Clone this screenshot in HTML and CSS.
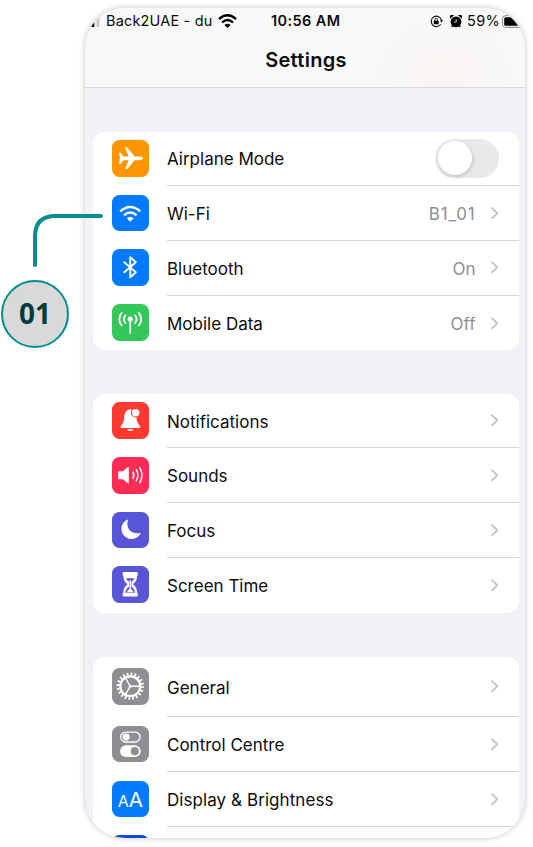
FILE: index.html
```
<!DOCTYPE html>
<html lang="en">
<head>
<meta charset="utf-8">
<title>Settings</title>
<link rel="stylesheet" href="styles.css">
</head>
<body>
<svg class="defs" width="0" height="0">
  <symbol id="chevron" viewBox="0 0 8 13"><path d="M1 1l5.8 5.5L1 12" fill="none" stroke="#c3c3c6" stroke-width="1.9" stroke-linecap="round" stroke-linejoin="round"/></symbol>
</svg>
<main class="phone">
  <header class="header">
    <div class="status">
      <div class="carrier">
        <svg class="signal" width="15" height="12" viewBox="0 0 15 12"><rect x="6" y="3" width="3.4" height="9" rx="1" fill="#000"/><rect x="11.5" y="0" width="3" height="12" rx="1" fill="#c8c8c8"/></svg>
        <span class="operator">Back2UAE - du</span>
        <svg width="19" height="14" viewBox="0 0 19 14"><g fill="none" stroke="#000" stroke-width="2.3"><path d="M1 5.1Q9.5-2.5 18 5.1"/><path d="M4 8.5Q9.5 3.5 15 8.5"/></g><path d="M6.4 10.9Q9.5 8.5 12.6 10.9L9.5 14Z"/></svg>
      </div>
      <span class="time">10:56 AM</span>
      <div class="indicators">
        <svg width="13" height="13" viewBox="0 0 13 13"><path d="M11.5 5.2A5.200 5.200 0 1 0 10.800 9.200" fill="none" stroke="#111" stroke-width="1.1"/><path d="M9.800 5.2h3.200L11.5 7.6Z"/><rect x="3.8" y="5.7" width="4.800" height="3.600" rx=".6"/><path d="M4.900 6V4.700a1.300 1.300 0 0 1 2.600 0V6" fill="none" stroke="#111" stroke-width=".9"/></svg>
        <svg class="alarm" width="12" height="13" viewBox="0 0 12 13"><circle cx="6" cy="6.800" r="5.400"/><path d="M.2 3.600A2.200 2.200 0 0 1 3.900.5ZM11.8 3.600A2.200 2.200 0 0 0 8.100.5ZM1 12.200l1.500-3 2 2zM11 12.200l-1.500-3-2 2z"/><path d="M6.200 4v3.100H3.800" fill="none" stroke="#ddd" stroke-width=".9"/></svg>
        <span class="percent">59%</span>
        <svg class="battery" width="24" height="13" viewBox="0 0 24 13"><rect x=".6" y=".6" width="22.8" height="11.8" rx="3" fill="none" stroke="#888"/><rect x="2.2" y="2.2" width="14" height="8.6" rx="1.5"/></svg>
      </div>
    </div>
    <h1 class="title">Settings</h1>
  </header>

  <section class="card">
    <div class="row">
      <svg class="icon orange" viewBox="0 0 36 36"><path fill="#fff" d="M7 12.600h1.500l2.700 3.700h5.300L12.800 7.500h2.300l7.200 8.800h4.900c2 0 3.400.8 3.400 1.800s-1.400 1.800-3.400 1.800h-4.900l-7.200 8.800h-2.300l3.700-8.800h-5.300l-2.700 3.700H7l.8-5.500Z"/></svg>
      <div class="body"><span class="label">Airplane Mode</span><span class="toggle"></span></div>
    </div>
    <div class="row">
      <svg class="icon blue" viewBox="0 0 36 36"><g fill="none" stroke="#fff" stroke-width="2.3"><path d="M8 16.2Q18 7.4 28 16.2"/><path d="M11.8 20Q18 14.5 24.2 20"/></g><path fill="#fff" d="M14.6 23Q18 20 21.4 23L18 26.4Z"/></svg>
      <div class="body"><span class="label">Wi-Fi</span><span class="value wide">B1_01</span><svg class="chevron"><use href="#chevron"/></svg></div>
    </div>
    <div class="row">
      <svg class="icon blue" viewBox="0 0 36 36"><path d="M11.5 12.5l12 10.4-5.500 5V8l5.500 5-12 10.4" fill="none" stroke="#fff" stroke-width="1.9" stroke-linejoin="round"/></svg>
      <div class="body"><span class="label">Bluetooth</span><span class="value">On</span><svg class="chevron"><use href="#chevron"/></svg></div>
    </div>
    <div class="row">
      <svg class="icon green" viewBox="0 0 36 36"><circle cx="18" cy="14.9" r="2.6" fill="#fff"/><path d="M18 15v13.5" stroke="#fff" stroke-width="1.7" stroke-linecap="round"/><g fill="none" stroke="#fff" stroke-width="1.8" stroke-linecap="round"><path d="M13.200 11.200a6 6 0 0 0 0 7.500M22.800 11.200a6 6 0 0 1 0 7.500M9.500 8.800a9.500 9.500 0 0 0 0 12.300M26.500 8.800a9.500 9.500 0 0 1 0 12.300"/></g></svg>
      <div class="body"><span class="label">Mobile Data</span><span class="value">Off</span><svg class="chevron"><use href="#chevron"/></svg></div>
    </div>
  </section>

  <section class="card">
    <div class="row">
      <svg class="icon red" viewBox="0 0 36 36"><path fill="#fff" d="M8.500 24.200c.8-1.800 3-2.600 3.300-7.600.3-5.200 2-8.900 6.200-9.400 1.300 0 2 .3 2.700.8 3 2 3.400 4 3.600 8.600.4 5 2.700 5.800 3.500 7.600q.2 1.400-1 1.400H9.500q-1.200 0-1-1.400ZM15 26.800h6q-.8 1.900-3 1.900T15 26.800Z"/><circle cx="23.300" cy="10.500" r="4.700" fill="#ff3a30"/><circle cx="23.300" cy="10.500" r="3.700" fill="#fff"/></svg>
      <div class="body"><span class="label">Notifications</span><svg class="chevron"><use href="#chevron"/></svg></div>
    </div>
    <div class="row">
      <svg class="icon pink" viewBox="0 0 36 36"><path fill="#fff" d="M7.2 14h3.5l4.500-3.700q1.400-1 1.400.6v14.200q0 1.600-1.400.6L10.700 22H7.200Q6 22 6 20.800V15.200Q6 14 7.200 14Z"/><g fill="none" stroke="#fff" stroke-width="1.500" stroke-linecap="round"><path d="M20.700 15q1.700 3 0 6M24 12.700q3 5.300 0 10.600M27.300 10.500q4.600 7.500 0 15"/></g></svg>
      <div class="body"><span class="label">Sounds</span><svg class="chevron"><use href="#chevron"/></svg></div>
    </div>
    <div class="row">
      <svg class="icon indigo" viewBox="0 0 36 36"><path fill="#fff" d="M15.700 8.100C13.300 15.500 18.500 22.500 27.700 20.700q.6 0 .3.800A10 10 0 1 1 15 7.600q.9-.3.700.5Z"/></svg>
      <div class="body"><span class="label">Focus</span><svg class="chevron"><use href="#chevron"/></svg></div>
    </div>
    <div class="row">
      <svg class="icon indigo" viewBox="0 0 36 36"><path fill="#fff" d="M10.500 7Q10.500 6 11.500 6h13q1 0 1 1v1.600q0 .9-.8 1c0 4-1 5.800-4 8.400 3 2.600 4 4.400 4 8.400q.8.100.8 1V29q0 1-1 1h-13q-1 0-1-1v-1.600q0-.9.800-1c0-4 1-5.800 4-8.400-3-2.600-4-4.400-4-8.400q-.8-.1-.8-1Z"/><path fill="#5856d6" d="M13.800 12h8.400q-.6 1.500-3 3.600v4.800q3.500 2.600 3.600 6h-9.600q.1-3.400 3.600-6v-4.800q-2.400-2.100-3-3.600Z"/><path fill="#fff" d="M17.300 14h1.400v8.500l3 3.500h-7.400l3-3.500Z"/></svg>
      <div class="body"><span class="label">Screen Time</span><svg class="chevron"><use href="#chevron"/></svg></div>
    </div>
  </section>

  <section class="card last">
    <div class="row tall">
      <svg class="icon gray" viewBox="0 0 36 36"><g fill="none" stroke="#fff"><circle cx="18" cy="18" r="12" stroke-width="3" stroke-dasharray="1.700 2.070"/><circle cx="18" cy="18" r="9.800" stroke-width="2.200"/><path d="M18 18h9M18 18l-4.600-8M18 18l-4.600 8" stroke-width="1.400"/></g><circle cx="18" cy="18" r="1.500" fill="#fff"/></svg>
      <div class="body"><span class="label">General</span><svg class="chevron"><use href="#chevron"/></svg></div>
    </div>
    <div class="row">
      <svg class="icon gray" viewBox="0 0 36 36"><rect x="8.600" y="6" width="19" height="9.800" rx="4.900" fill="none" stroke="#fff" stroke-width="1.300"/><circle cx="14" cy="10.900" r="3.400" fill="#fff"/><rect x="8" y="19" width="20.300" height="11.600" rx="5.800" fill="#fff"/><circle cx="22.500" cy="24.800" r="4" fill="#8e8e93"/></svg>
      <div class="body"><span class="label">Control Centre</span><svg class="chevron"><use href="#chevron"/></svg></div>
    </div>
    <div class="row">
      <div class="icon blue letters"><span class="small-a">A</span><span class="big-a">A</span></div>
      <div class="body"><span class="label bright">Display &amp; Brightness</span><svg class="chevron"><use href="#chevron"/></svg></div>
    </div>
    <div class="row">
      <div class="icon deep"></div>
      <div class="body"></div>
    </div>
  </section>
</main>
<aside class="callout">
  <svg class="connector" width="70" height="54" viewBox="0 0 70 54"><path d="M2 51V22.500Q2 2 22.500 2H68" fill="none" stroke="#028e8e" stroke-width="4" stroke-linecap="round"/></svg>
  <span class="badge">01</span>
</aside>
</body>
</html>
```
FILE: styles.css
```
* { box-sizing: border-box; }
body {
  margin: 0;
  width: 533px;
  height: 847px;
  overflow: hidden;
  background: #fff;
  font-family: Inter, "Liberation Sans", sans-serif;
  color: #0c0c0c;
}
.defs { position: absolute; }
.phone {
  width: 440px;
  height: 830px;
  margin: 8px 0 0 85px;
  overflow: hidden;
  border-radius: 40px;
  background: #f2f1f7;
  box-shadow: 0 0 6px rgba(0, 0, 0, .24);
}
.header {
  height: 80px;
  border-bottom: 1px solid #d8d7dd;
  background: radial-gradient(circle at 360px 76px, #faf5f3, transparent 75px), #f8f8f8;
}
.status {
  display: grid;
  grid-template-columns: 186px 72px 1fr;
  height: 26px;
  align-items: center;
  font-size: 14.500px;
  line-height: 26px;
  white-space: nowrap;
}
.carrier { display: flex; align-items: center; }
.signal { flex: none; }
.operator { width: 107px; margin: 0 5px 0 6px; letter-spacing: .17px; }
.time { font-weight: 600; letter-spacing: .4px; }
.indicators { display: flex; align-items: center; padding-left: 86.500px; }
.alarm { margin-left: 7px; }
.percent { width: 32px; margin: 0 3px 0 5.500px; letter-spacing: .4px; }
.battery { flex: none; }
.title {
  margin: 11px 0 0 2px;
  font-size: 20px;
  line-height: 30px;
  font-weight: 600;
  letter-spacing: .3px;
  text-align: center;
}
.card {
  width: 426.500px;
  margin: 43.500px 0 0 7.500px;
  overflow: hidden;
  border-radius: 12px;
  background: #fff;
}
.card.last { margin-top: 44.300px; }
.row { display: flex; height: 54.700px; padding-left: 19.500px; align-items: center; }
.row.tall { height: 60.600px; }
.icon { width: 36.500px; height: 36.500px; flex: none; margin-bottom: 1px; border-radius: 7.500px; }
.orange { background: #ff9501; }
.blue { background: #017aff; }
.green { background: #34c759; }
.red { background: #ff3a30; }
.pink { background: #ff2c55; }
.indigo { background: #5856d6; }
.gray { background: #8e8e93; }
.deep { background: #0b4ad6; }
.body {
  display: flex;
  flex: 1;
  align-self: stretch;
  align-items: center;
  margin-left: 18.500px;
  padding-right: 20.500px;
  border-bottom: 1px solid #d6d6d8;
}
.row:last-child .body { border-bottom: 0; }
.label { flex: 1; padding-top: 2px; font-size: 17px; white-space: nowrap; }
.bright { letter-spacing: .07px; }
.value { padding-top: 2px; font-size: 17px; color: #8e8e90; }
.wide { letter-spacing: .8px; }
.chevron { width: 7.500px; height: 12.500px; margin-left: 15.500px; }
.toggle {
  width: 63.500px;
  height: 39px;
  border-radius: 20px;
  padding: 2.500px;
  background: #e9e9ea;
}
.toggle::before {
  content: "";
  display: block;
  width: 34px;
  height: 34px;
  border-radius: 50%;
  background: #fff;
  box-shadow: 1px 2px 4px rgba(0, 0, 0, .15);
}
.letters { display: flex; justify-content: center; align-items: baseline; color: #fff; line-height: 38px; }
.small-a { font-size: 16px; }
.big-a { font-size: 20.500px; }
.callout { position: absolute; left: 1px; top: 214px; width: 102px; }
.connector { display: block; margin-left: 32px; }
.badge {
  display: grid;
  place-items: center;
  width: 68px;
  height: 68px;
  padding-bottom: 2px;
  margin-top: 12px;
  border: 2px solid #028e8e;
  border-radius: 50%;
  background: #d9d9d9;
  color: #003b3b;
  font: 700 28px "Open Sans", sans-serif;
}
```
